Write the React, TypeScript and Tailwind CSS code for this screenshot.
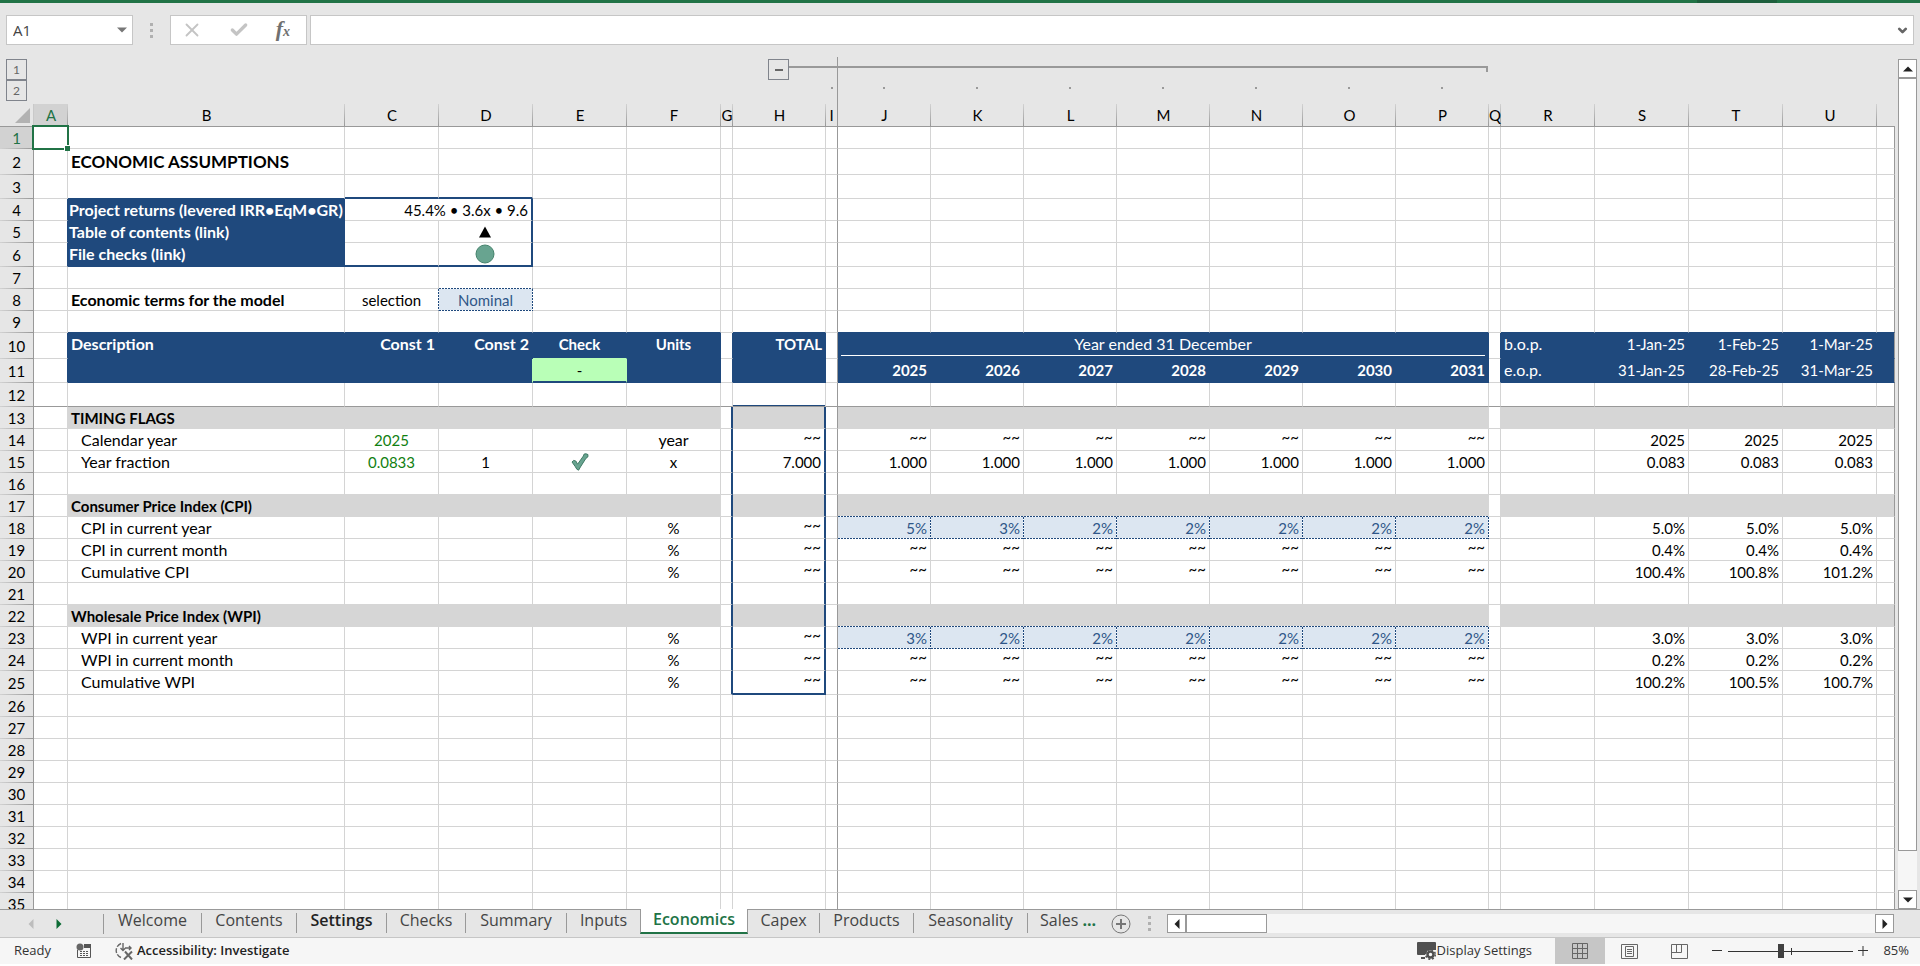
import { clsx } from 'clsx';
import { Check, ChevronDown, X } from 'lucide-react';

type Fill = 'navy' | 'gray' | 'green' | 'input' | 'none';

type Cell = {
  text?: React.ReactNode;
  className?: string;
  span?: number;
};

const COLUMNS = [
  { id: 'A', width: 'w-[34px]' },
  { id: 'B', width: 'w-[277px]' },
  { id: 'C', width: 'w-[94px]' },
  { id: 'D', width: 'w-[94px]' },
  { id: 'E', width: 'w-[94px]' },
  { id: 'F', width: 'w-[94px]' },
  { id: 'G', width: 'w-[12px]' },
  { id: 'H', width: 'w-[93px]' },
  { id: 'I', width: 'w-[12px]' },
  { id: 'J', width: 'w-[93px]' },
  { id: 'K', width: 'w-[93px]' },
  { id: 'L', width: 'w-[93px]' },
  { id: 'M', width: 'w-[93px]' },
  { id: 'N', width: 'w-[93px]' },
  { id: 'O', width: 'w-[93px]' },
  { id: 'P', width: 'w-[93px]' },
  { id: 'Q', width: 'w-[12px]' },
  { id: 'R', width: 'w-[94px]' },
  { id: 'S', width: 'w-[94px]' },
  { id: 'T', width: 'w-[94px]' },
  { id: 'U', width: 'w-[94px]' },
  { id: '', width: '' },
];

const YEAR_COLUMNS = ['J', 'K', 'L', 'M', 'N', 'O', 'P'];
const MONTH_COLUMNS = ['S', 'T', 'U'];
const COLUMN_ORDER = 'ABCDEFGHIJKLMNOPQRSTUV';
const ROWS = Array.from({ length: 35 }, (_, i) => i + 1);

const TALL_ROWS: Record<number, string> = {
  2: 'h-[26px]',
  3: 'h-[24px]',
  6: 'h-[24px]',
  10: 'h-[26px]',
  11: 'h-[24px]',
  12: 'h-[24px]',
  25: 'h-[24px]',
};

const FILL: Record<Fill, string> = {
  navy: 'bg-[#1f497d] text-white',
  gray: 'bg-[#d6d6d6]',
  green: 'bg-[#b9ffb7]',
  input: 'bg-[#dce6f1] text-[#2f5688]',
  none: 'bg-white',
};

const RIGHT: Record<Fill, string> = {
  navy: 'border-r-[#1f497d]',
  gray: 'border-r-[#d6d6d6]',
  green: 'border-r-[#b9ffb7]',
  input: 'border-r-transparent',
  none: 'border-r-[#d4d4d4]',
};

const BOTTOM: Record<Fill, string> = {
  navy: 'border-b-[#1f497d]',
  gray: 'border-b-[#d6d6d6]',
  green: 'border-b-[#b9ffb7]',
  input: 'border-b-transparent',
  none: 'border-b-[#d4d4d4]',
};

// fine dotted edges of the input cells, painted under transparent borders
const DOTS_RIGHT =
  'bg-origin-border bg-no-repeat bg-[image:repeating-linear-gradient(to_bottom,#1f497d_0_2px,#fff_2px_3px)] bg-[size:1px_100%] bg-right';
const DOTS_BOTTOM =
  'bg-origin-border bg-no-repeat bg-[image:repeating-linear-gradient(to_right,#1f497d_0_2px,#fff_2px_3px)] bg-[size:100%_1px] bg-bottom';
const DOTS_BOTH =
  'bg-origin-border bg-no-repeat bg-[image:repeating-linear-gradient(to_bottom,#1f497d_0_2px,#fff_2px_3px),repeating-linear-gradient(to_right,#1f497d_0_2px,#fff_2px_3px)] bg-[size:1px_100%,100%_1px] bg-[position:right_top,left_bottom]';

const right = 'text-right pr-[3px]';
const center = 'text-center';
const bold = 'font-bold text-[16px] pl-[3px]';
const boxed = 'font-bold text-[16px] pl-px';
const section = 'font-bold pl-[3px]';
const indent = 'text-[16px] pl-[13px]';

const cells: Record<string, Cell> = {
  B2: { text: 'ECONOMIC ASSUMPTIONS', className: 'font-bold text-[17px] pl-[3px]' },
  B4: { text: 'Project returns (levered IRR•EqM•GR)', className: boxed },
  B5: { text: 'Table of contents (link)', className: boxed },
  B6: { text: 'File checks (link)', className: boxed },
  C4: { text: '45.4% • 3.6x • 9.6', className: right, span: 2 },
  D5: { text: <TriangleMark />, className: center },
  D6: { text: <CircleMark />, className: center },
  B8: { text: 'Economic terms for the model', className: bold },
  C8: { text: 'selection', className: center },
  D8: { text: 'Nominal', className: center },
  B10: { text: 'Description', className: bold },
  C10: { text: 'Const 1', className: 'font-bold text-[16px] text-right pr-[3px]' },
  D10: { text: 'Const 2', className: 'font-bold text-[16px] text-right pr-[3px]' },
  E10: { text: 'Check', className: 'font-bold text-center' },
  F10: { text: 'Units', className: 'font-bold text-center' },
  H10: { text: 'TOTAL', className: 'font-bold text-right pr-[3px]' },
  J10: { text: <div className="mx-[3px] border-b border-white">Year ended 31 December</div>, className: 'text-[16px] text-center', span: 7 },
  E11: { text: '-', className: center },
  R10: { text: 'b.o.p.', className: 'text-[16px] pl-[3px]' },
  R11: { text: 'e.o.p.', className: 'text-[16px] pl-[3px]' },
  B13: { text: 'TIMING FLAGS', className: section },
  B14: { text: 'Calendar year', className: indent },
  C14: { text: '2025', className: 'text-center text-[#118011]' },
  F14: { text: 'year', className: 'text-[16px] text-center' },
  B15: { text: 'Year fraction', className: indent },
  C15: { text: '0.0833', className: 'text-center text-[#118011]' },
  D15: { text: '1', className: center },
  E15: { text: <TickMark />, className: center },
  F15: { text: 'x', className: center },
  H15: { text: '7.000', className: right },
  B17: { text: 'Consumer Price Index (CPI)', className: section },
  B18: { text: 'CPI in current year', className: indent },
  B19: { text: 'CPI in current month', className: indent },
  B20: { text: 'Cumulative CPI', className: indent },
  B22: { text: 'Wholesale Price Index (WPI)', className: section },
  B23: { text: 'WPI in current year', className: indent },
  B24: { text: 'WPI in current month', className: indent },
  B25: { text: 'Cumulative WPI', className: indent },
};

function fillRow(columns: string[], row: number, values: string[], className = right) {
  columns.forEach((col, i) => {
    cells[`${col}${row}`] = { text: values[i], className };
  });
}

fillRow(YEAR_COLUMNS, 11, ['2025', '2026', '2027', '2028', '2029', '2030', '2031'], 'font-bold text-right pr-[3px]');
fillRow(YEAR_COLUMNS, 15, Array(7).fill('1.000'));
fillRow(YEAR_COLUMNS, 18, ['5%', '3%', '2%', '2%', '2%', '2%', '2%']);
fillRow(YEAR_COLUMNS, 23, ['3%', '2%', '2%', '2%', '2%', '2%', '2%']);
fillRow(MONTH_COLUMNS, 10, ['1-Jan-25', '1-Feb-25', '1-Mar-25']);
fillRow(MONTH_COLUMNS, 11, ['31-Jan-25', '28-Feb-25', '31-Mar-25']);
fillRow(MONTH_COLUMNS, 14, ['2025', '2025', '2025']);
fillRow(MONTH_COLUMNS, 15, ['0.083', '0.083', '0.083']);
fillRow(MONTH_COLUMNS, 18, ['5.0%', '5.0%', '5.0%']);
fillRow(MONTH_COLUMNS, 19, ['0.4%', '0.4%', '0.4%']);
fillRow(MONTH_COLUMNS, 20, ['100.4%', '100.8%', '101.2%']);
fillRow(MONTH_COLUMNS, 23, ['3.0%', '3.0%', '3.0%']);
fillRow(MONTH_COLUMNS, 24, ['0.2%', '0.2%', '0.2%']);
fillRow(MONTH_COLUMNS, 25, ['100.2%', '100.5%', '100.7%']);

const tilde = 'text-right pr-[3px] align-top leading-4';
[14, 19, 20, 24, 25].forEach((row) => fillRow(YEAR_COLUMNS, row, Array(7).fill('~~'), tilde));
[14, 18, 19, 20, 23, 24, 25].forEach((row) => fillRow(['H'], row, ['~~'], tilde));
[18, 19, 20, 23, 24, 25].forEach((row) => fillRow(['F'], row, ['%'], center));

function fillAt(row: number, col: number): Fill {
  const id = COLUMN_ORDER[col];
  if (!id) return 'none';
  if (id === 'B' && row >= 4 && row <= 6) return 'navy';
  if (id === 'D' && row === 8) return 'input';
  if (id === 'E' && row === 11) return 'green';
  if ('AGIQ'.includes(id)) return 'none';
  if (row === 10 || row === 11) return 'navy';
  if (row === 13 || row === 17 || row === 22) return 'gray';
  if ((row === 18 || row === 23) && YEAR_COLUMNS.includes(id)) return 'input';
  return 'none';
}

function rightBorder(row: number, col: number) {
  const id = COLUMN_ORDER[col];
  if (id === 'I' || id === 'V') return 'border-r-[#999]';
  if ((id === 'G' || id === 'H') && row >= 13 && row <= 25) return 'border-r-2 border-r-[#1f497d]';
  if (id === 'D' && row >= 4 && row <= 6) return 'border-r-2 border-r-[#1f497d]';
  const next = fillAt(row, col + 1);
  if (next === 'green' || next === 'input') return RIGHT[next];
  const own = fillAt(row, col);
  return RIGHT[own === 'none' ? next : own];
}

function bottomBorder(row: number, col: number) {
  const id = COLUMN_ORDER[col];
  if (row === 12) return clsx('border-b-[#999]', id === 'H' && 'shadow-[inset_0_-1px_0_#1f497d]');
  if ((id === 'C' || id === 'D') && (row === 3 || row === 6)) return 'border-b-2 border-b-[#1f497d]';
  if (id === 'H' && row === 25) return 'border-b-2 border-b-[#1f497d]';
  if (id === 'E' && row === 11) return 'border-b-2 border-b-[#1f497d]';
  const below = fillAt(row + 1, col);
  if (below === 'green' || below === 'input') return BOTTOM[below];
  const own = fillAt(row, col);
  return BOTTOM[own === 'none' ? below : own];
}

function dottedEdges(row: number, col: number) {
  const own = fillAt(row, col) === 'input';
  const onRight = own || (fillAt(row, col + 1) === 'input' && COLUMN_ORDER[col] !== 'I');
  const onBottom = own || fillAt(row + 1, col) === 'input';
  if (onRight && onBottom) return DOTS_BOTH;
  if (onRight) return DOTS_RIGHT;
  return onBottom ? DOTS_BOTTOM : '';
}

function TriangleMark() {
  return (
    <svg viewBox="0 0 12 12" className="mx-auto h-3 w-3" aria-label="Up">
      <path d="M6 0.5 12 11.5H0Z" fill="#000" />
    </svg>
  );
}

function CircleMark() {
  return (
    <svg viewBox="0 0 20 20" className="mx-auto mt-px h-5 w-5" aria-label="Checks passed">
      <circle cx="10" cy="10" r="9" fill="#68a490" stroke="#46836d" />
    </svg>
  );
}

function TickMark() {
  return (
    <svg viewBox="0 0 18 18" className="mx-auto h-[18px] w-[18px]" aria-label="OK">
      <path
        d="M1 9 2.600 7.400 4.800 8 6.600 11.200 12.400 3 13.200 1 15 0.800 17 1.600 16.800 4 15 5.200 9.400 14 7.600 17.200 5.800 16.200 4.400 13.800Z"
        fill="#68a490"
        stroke="#3f7a65"
      />
    </svg>
  );
}

function GripDots() {
  return (
    <div className="flex flex-col gap-[3px]">
      <span className="h-[3px] w-[3px] bg-[#b0b0b0]" />
      <span className="h-[3px] w-[3px] bg-[#b0b0b0]" />
      <span className="h-[3px] w-[3px] bg-[#b0b0b0]" />
    </div>
  );
}

function Arrow({ dir, className }: { dir: 'up' | 'down' | 'left' | 'right'; className?: string }) {
  const paths = {
    up: 'M5 2.5 10 7.5H0Z',
    down: 'M5 7.5 0 2.5H10Z',
    left: 'M2.5 5 7.5 0V10Z',
    right: 'M7.5 5 2.5 0V10Z',
  };
  return (
    <svg viewBox="0 0 10 10" className={clsx('h-[10px] w-[10px]', className)} fill="currentColor">
      <path d={paths[dir]} />
    </svg>
  );
}

function FormulaBar() {
  return (
    <div className="flex h-[30px] pr-[6px] pl-[6px]">
      <div className="flex w-[127px] items-center border border-[#c6c6c6] bg-white pr-[5px] pl-[6px]">
        <input
          aria-label="Name box"
          defaultValue="A1"
          className="min-w-0 flex-1 bg-transparent font-['Open_Sans',sans-serif] text-[15px] text-[#444] outline-none"
        />
        <button aria-label="Open name list" className="text-[#777]">
          <Arrow dir="down" className="h-[8px] w-[8px]" />
        </button>
      </div>
      <div className="flex w-[37px] items-center justify-center">
        <GripDots />
      </div>
      <div className="flex w-[137px] items-center justify-between border border-[#c6c6c6] bg-white pr-[16px] pl-[10px]">
        <button aria-label="Cancel" className="text-[#c4c4c4]">
          <X className="h-[22px] w-[22px]" />
        </button>
        <button aria-label="Enter" className="text-[#c4c4c4]">
          <Check className="h-[20px] w-[20px]" strokeWidth={4} />
        </button>
        <button
          aria-label="Insert function"
          className="font-['Liberation_Serif',serif] text-[22px] leading-5 font-bold text-[#707070] italic"
        >
          <i>f</i>
          <i className="text-[14px]">x</i>
        </button>
      </div>
      <div className="ml-[3px] flex flex-1 items-center border border-[#c6c6c6] bg-white pr-[4px]">
        <input aria-label="Formula" className="h-full min-w-0 flex-1 bg-transparent px-2 outline-none" />
        <button aria-label="Expand formula bar" className="text-[#666]">
          <ChevronDown className="h-[13px] w-[13px]" strokeWidth={5} />
        </button>
      </div>
    </div>
  );
}

const levelButton = 'block h-[21px] w-[21px] border border-[#80848c] text-[12px] leading-4 text-[#666]';

function OutlineRows() {
  return (
    <>
      <tr className="h-[23px]">
        <td className="pt-[2px] pl-[6px] align-top">
          <button className={levelButton}>1</button>
        </td>
        <td colSpan={7} />
        <td className="align-top">
          <div className="flex pt-[2px]">
            <div className="w-[35px]" />
            <button aria-label="Collapse group" className="flex h-[21px] w-[21px] items-center justify-center border border-[#80848c]">
              <span className="h-[2px] w-[8px] bg-[#666]" />
            </button>
            <div className="mt-[7px] h-[2px] flex-1 bg-[#999]" />
          </div>
        </td>
        <td className="border-r border-[#999] pt-[9px] align-top">
          <div className="h-[2px] bg-[#999]" />
        </td>
        <td colSpan={7} className="pt-[9px] pr-px align-top">
          <div className="h-[6px] border-t-2 border-r-2 border-[#999]" />
        </td>
        <td colSpan={6} />
      </tr>
      <tr className="h-[24px]">
        <td className="pl-[6px] align-top">
          <button className={levelButton}>2</button>
        </td>
        <td colSpan={8} />
        {['I', ...YEAR_COLUMNS].map((id) => (
          <td key={id} className={clsx('pt-[7px] align-top', id === 'I' ? 'border-r border-[#999]' : 'pr-[2px]')}>
            <div className="mx-auto h-[2px] w-[2px] bg-[#999]" />
          </td>
        ))}
        <td colSpan={6} />
      </tr>
    </>
  );
}

function HeaderRow() {
  return (
    <tr className="h-[23px]">
      <th className="border-r border-b border-[#999] border-r-[#c9c9c9] p-0">
        <svg viewBox="0 0 15 15" className="mr-[3px] ml-auto h-[15px] w-[15px]">
          <path d="M15 0V15H0Z" fill="#b2b2b2" />
        </svg>
      </th>
      {COLUMNS.map((col) => (
        <th
          key={col.id}
          scope="col"
          className={clsx(
            'overflow-visible border-b border-[#999] p-0 text-center leading-5 font-normal',
            col.id !== '' && col.id !== 'I' && 'bg-[image:linear-gradient(to_bottom,#d2d2d2,#999)] bg-[size:1px_100%] bg-right bg-no-repeat',
            col.id === 'I' && 'border-r',
            col.id === 'A' && 'bg-[#d2d2d2] text-[#217346]',
          )}
        >
          {col.id}
        </th>
      ))}
    </tr>
  );
}

function SheetRow({ row }: { row: number }) {
  const tds: React.ReactNode[] = [];
  const raised = [6, 10, 11, 25].includes(row);
  for (let col = 0; col < COLUMNS.length; col++) {
    const id = COLUMN_ORDER[col];
    const cell = cells[`${id}${row}`];
    const span = cell?.span ?? 1;
    const last = col + span - 1;
    tds.push(
      <td
        key={id}
        colSpan={span}
        className={clsx(
          'border-r border-b p-0 whitespace-nowrap',
          cell?.className !== tilde && (raised ? 'align-top leading-[22px]' : 'leading-5'),
          FILL[fillAt(row, col)],
          rightBorder(row, last),
          bottomBorder(row, col),
          dottedEdges(row, col),
          cell?.className,
          row === 1 && col === 0 && 'relative',
        )}
      >
        {cell?.text}
        {row === 1 && col === 0 && (
          <div className="absolute -top-[2px] -right-[2px] -bottom-[2px] -left-[2px] border-2 border-[#217346]">
            <span className="absolute -right-[3px] -bottom-[3px] h-[6px] w-[6px] border-t border-l border-white bg-[#217346]" />
          </div>
        )}
      </td>,
    );
    col = last;
  }
  return (
    <tr className={TALL_ROWS[row] ?? 'h-[22px]'}>
      <th
        scope="row"
        className={clsx(
          'border-r border-[#999] bg-[image:linear-gradient(to_right,#d2d2d2,#999)] bg-[size:100%_1px] bg-bottom bg-no-repeat p-0 pb-px text-center leading-5 font-normal',
          row === 1 && 'bg-[#d2d2d2] text-[#217346]',
        )}
      >
        {row}
      </th>
      {tds}
    </tr>
  );
}

function Sheet() {
  return (
    <div className="min-w-0 flex-1 overflow-hidden">
      <table className="w-full table-fixed border-separate border-spacing-0 text-[15px] text-black">
        <colgroup>
          <col className="w-[34px]" />
          {COLUMNS.map((col) => (
            <col key={col.id} className={col.width} />
          ))}
        </colgroup>
        <thead>
          <OutlineRows />
          <HeaderRow />
        </thead>
        <tbody>
          {ROWS.map((row) => (
            <SheetRow key={row} row={row} />
          ))}
        </tbody>
      </table>
    </div>
  );
}

const scrollButton = 'flex shrink-0 items-center justify-center border border-[#999] bg-white text-[#222]';

function VerticalScroll() {
  return (
    <div className="flex w-[25px] flex-col items-center pt-[2px]">
      <button aria-label="Scroll up" className={clsx(scrollButton, 'h-[19px] w-[19px]')}>
        <Arrow dir="up" />
      </button>
      <div className="flex w-[19px] flex-1 flex-col bg-[#f6f6f6]">
        <div className="grow-[20] border border-[#999] bg-white" />
        <div className="grow" />
      </div>
      <button aria-label="Scroll down" className={clsx(scrollButton, 'h-[19px] w-[19px]')}>
        <Arrow dir="down" />
      </button>
    </div>
  );
}

const TABS = [
  { name: 'Welcome', width: 'w-[98px]' },
  { name: 'Contents', width: 'w-[95px]' },
  { name: 'Settings', width: 'w-[90px]' },
  { name: 'Checks', width: 'w-[79px]' },
  { name: 'Summary', width: 'w-[101px]' },
  { name: 'Inputs', width: 'w-[73px]' },
  { name: 'Economics', width: 'w-[108px]' },
  { name: 'Capex', width: 'w-[72px]' },
  { name: 'Products', width: 'w-[94px]' },
  { name: 'Seasonality', width: 'w-[114px]' },
];

function SheetTabs() {
  return (
    <div className="flex h-[29px] border-b border-[#c6c6c6]">
      <div className="flex w-[104px] items-center border-t border-[#999] pl-[26px]">
        <button aria-label="Previous sheets" className="text-[#bdbdbd]">
          <Arrow dir="left" />
        </button>
        <button aria-label="Next sheets" className="ml-[18px] text-[#0c6b35]">
          <Arrow dir="right" />
        </button>
        <span className="ml-auto h-5 w-px bg-[#999]" />
      </div>
      <nav className="flex text-[16px] text-[#444]">
        {TABS.map((tab) =>
          tab.name === 'Economics' ? (
            <button
              key={tab.name}
              className={clsx(
                tab.width,
                'mb-[3px] border-x border-b-2 border-x-[#999] border-b-[#217346] bg-white pb-1 leading-4 font-semibold text-[#217346]',
              )}
            >
              {tab.name}
            </button>
          ) : (
            <button
              key={tab.name}
              className={clsx(
                tab.width,
                'flex border-t border-[#999] pt-[3px] leading-[14px]',
                tab.name === 'Settings' && 'font-semibold text-[#222]',
              )}
            >
              <span className={clsx('h-5 flex-1', tab.name !== 'Inputs' && 'border-r border-[#999]')}>{tab.name}</span>
            </button>
          ),
        )}
      </nav>
      <div className="flex flex-1 items-center border-t border-[#999] pr-[26px]">
        <button className="w-[71px] pb-2 pl-[12px] text-left text-[16px] leading-4 whitespace-nowrap text-[#444]">
          Sales <b className="text-[#217346]">...</b>
        </button>
        <button aria-label="New sheet" className="ml-[12px] text-[#777]">
          <svg viewBox="0 0 20 20" className="h-5 w-5" fill="none" stroke="currentColor">
            <circle cx="10" cy="10" r="9" />
            <path d="M10 5V15M5 10H15" strokeWidth="2" />
          </svg>
        </button>
        <div className="flex w-[36px] items-center justify-center">
          <GripDots />
        </div>
        <button aria-label="Scroll left" className={clsx(scrollButton, 'h-[19px] w-[19px]')}>
          <Arrow dir="left" />
        </button>
        <div className="flex h-[19px] flex-1 bg-[#f6f6f6]">
          <div className="w-[81px] border border-[#999] bg-white" />
        </div>
        <button aria-label="Scroll right" className={clsx(scrollButton, 'h-[19px] w-[19px]')}>
          <Arrow dir="right" />
        </button>
      </div>
    </div>
  );
}

function StatusBar() {
  return (
    <footer className="mb-[2px] flex h-[26px] items-center bg-[#f6f6f6] pl-[14px] text-[13px] text-[#333]">
      <span className="w-[62px]">Ready</span>
      <button aria-label="Record macro" className="w-[38px]">
        <svg viewBox="0 0 16 16" className="h-4 w-4" fill="none" stroke="#555">
          <path d="M1.5 7V14.500H14.500V4" />
          <path d="M8 1H15V5H8Z" fill="#555" stroke="none" />
          <circle cx="4" cy="4" r="3.500" fill="#666" stroke="none" />
          <path d="M4 8.500H13M4 10.500H13M4 12.500H13" strokeDasharray="2 1" />
        </svg>
      </button>
      <button className="flex items-center gap-[3px] font-semibold text-[#222]">
        <svg viewBox="0 0 20 18" className="h-[18px] w-5" fill="none" stroke="#666" strokeWidth="1.4">
          <path d="M7 1.500A7.500 7.500 0 0 0 7 15.500" strokeDasharray="5 1.500" />
          <path d="M9 1V8M6.500 6 9 8.500 11.500 6M11 6H17M15 4 17 6 15 8" />
          <path d="M11 9.500 18 17.500M18 9.500 10 17.500" strokeWidth="2" />
        </svg>
        Accessibility: Investigate
      </button>
      <div className="flex-1" />
      <button className="mr-[23px] flex items-center gap-px">
        <svg viewBox="0 0 19 18" className="h-[18px] w-[19px]">
          <path d="M1 0H18Q19 0 19 1V8H11L8 13H1Q0 13 0 12V1Q0 0 1 0ZM4 15H8V17H4Z" fill="#505050" />
          <circle cx="13.500" cy="12.500" r="3" fill="none" stroke="#505050" strokeWidth="2.500" />
          <circle cx="13.500" cy="12.500" r="4.800" fill="none" stroke="#505050" strokeWidth="1.500" strokeDasharray="2 1.800" />
        </svg>
        Display Settings
      </button>
      <button aria-label="Normal view" className="flex h-full w-[50px] items-center justify-center bg-[#c6c6c6]">
        <svg viewBox="0 0 16 16" className="h-4 w-4" fill="none" stroke="#666">
          <path d="M0.500 0.500H15.500V15.500H0.500ZM5.500 0V16M10.500 0V16M0 5.500H16M0 10.500H16" />
        </svg>
      </button>
      <button aria-label="Page layout view" className="flex h-full w-[49px] items-center justify-center">
        <svg viewBox="0 0 17 15" className="h-[15px] w-[17px]" fill="none" stroke="#666">
          <path d="M0.500 0.500H16.500V14.500H0.500ZM4.500 2.500H12.500V12.500H4.500ZM6 5.500H11M6 7.500H11M6 9.500H11" />
        </svg>
      </button>
      <button aria-label="Page break view" className="flex h-full w-[50px] items-center justify-center">
        <svg viewBox="0 0 17 15" className="h-[15px] w-[17px]" fill="none" stroke="#666">
          <path d="M0.500 0.500H16.500V14.500H0.500ZM0.500 8.500H10.500V0.500M5.500 0.500V8.500" />
        </svg>
      </button>
      <button aria-label="Zoom out" className="mr-[6px] ml-[8px]">
        <svg viewBox="0 0 10 10" className="h-[10px] w-[10px]" stroke="#333">
          <path d="M0 4.500H10" />
        </svg>
      </button>
      <ZoomSlider />
      <button aria-label="Zoom in" className="ml-[5px]">
        <svg viewBox="0 0 10 10" className="h-[10px] w-[10px]" stroke="#333">
          <path d="M0 4.500H10M5 0V10" />
        </svg>
      </button>
      <button className="w-[52px] pr-[11px] text-right">85%</button>
    </footer>
  );
}

function ZoomSlider() {
  return (
    <div className="relative flex h-[14px] w-[125px] items-center">
      <input
        type="range"
        aria-label="Zoom"
        min={10}
        max={190}
        defaultValue={86}
        className="h-[14px] w-full appearance-none bg-[image:linear-gradient(#333,#333)] bg-[size:100%_1px] bg-center bg-no-repeat [&::-webkit-slider-thumb]:h-[14px] [&::-webkit-slider-thumb]:w-[6px] [&::-webkit-slider-thumb]:appearance-none [&::-webkit-slider-thumb]:bg-[#404040]"
      />
      <span className="absolute left-1/2 h-[7px] w-px bg-[#333]" />
    </div>
  );
}

export default function App() {
  return (
    <div className="flex h-screen flex-col overflow-hidden bg-white font-['Lato',sans-serif]">
      <div className="flex min-h-0 flex-1 flex-col bg-[#e6e6e6]">
        <div className="flex h-[3px] shrink-0 justify-end bg-[#217346] pr-[143px]">
          <div className="w-[80px] bg-[#1e5f3d]" />
        </div>
        <div className="shrink-0 pt-[12px] pb-[12px]">
          <FormulaBar />
        </div>
        <main className="flex min-h-0 flex-1">
          <Sheet />
          <VerticalScroll />
        </main>
      </div>
      <div className="shrink-0 font-['Open_Sans',sans-serif]">
        <div className="bg-[#e6e6e6]">
          <SheetTabs />
        </div>
        <StatusBar />
      </div>
    </div>
  );
}
